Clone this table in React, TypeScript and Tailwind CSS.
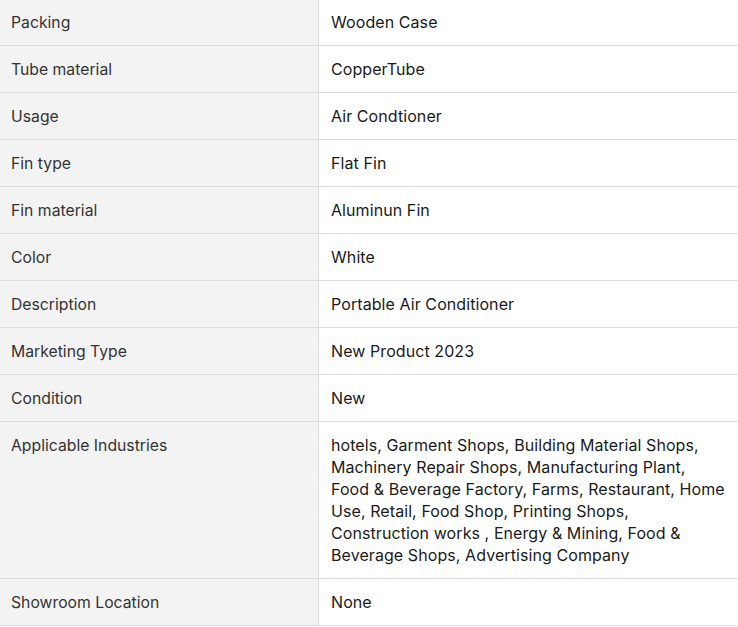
import React from "react";

const rows: [string, string][] = [
  ["Packing", "Wooden Case"],
  ["Tube material", "CopperTube"],
  ["Usage", "Air Condtioner"],
  ["Fin type", "Flat Fin"],
  ["Fin material", "Aluminun Fin"],
  ["Color", "White"],
  ["Description", "Portable Air Conditioner"],
  ["Marketing Type", "New Product 2023"],
  ["Condition", "New"],
  [
    "Applicable Industries",
    "hotels, Garment Shops, Building Material Shops, Machinery Repair Shops, Manufacturing Plant, Food & Beverage Factory, Farms, Restaurant, Home Use, Retail, Food Shop, Printing Shops, Construction works , Energy & Mining, Food & Beverage Shops, Advertising Company",
  ],
  ["Showroom Location", "None"],
];

export default function App() {
  return (
    <div
      className="w-[738px] bg-white -mt-px"
      style={{ fontFamily: "Inter, 'Noto Sans', sans-serif" }}
    >
      {rows.map(([k, v]) => (
        <div
          key={k}
          className="grid grid-cols-[319px_1fr] border-b border-[#dedede] leading-[22px]"
        >
          <div className="bg-[#f3f3f3] border-r border-[#dedede] pt-[13px] pb-[11px] pl-[11px] pr-3 text-[15.75px] text-[#333333]">
            {k}
          </div>
          <div className="py-3 pl-3 pr-3 text-[16px] tracking-[0.08px] text-[#1a1a1a]">{v}</div>
        </div>
      ))}
    </div>
  );
}
